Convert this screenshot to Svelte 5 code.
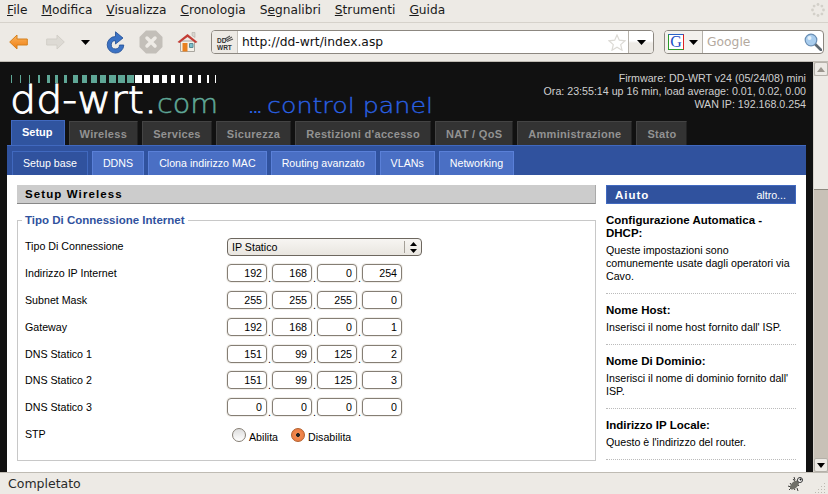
<script lang="ts">
	const menus = [
		['F', 'ile'],
		['M', 'odifica'],
		['V', 'isualizza'],
		['C', 'ronologia'],
		['Se', 'gnalibri', 1],
		['S', 'trumenti'],
		['G', 'uida']
	];
	const tabs = ['Setup', 'Wireless', 'Services', 'Sicurezza', "Restizioni d'accesso", 'NAT / QoS', 'Amministrazione', 'Stato'];
	const subtabs = ['Setup base', 'DDNS', 'Clona indirizzo MAC', 'Routing avanzato', 'VLANs', 'Networking'];
	const rows = [
		['Indirizzo IP Internet', [192, 168, 0, 254]],
		['Subnet Mask', [255, 255, 255, 0]],
		['Gateway', [192, 168, 0, 1]],
		['DNS Statico 1', [151, 99, 125, 2]],
		['DNS Statico 2', [151, 99, 125, 3]],
		['DNS Statico 3', [0, 0, 0, 0]]
	] as [string, number[]][];
	const help = [
		['Configurazione Automatica - DHCP:', 'Queste impostazioni sono comunemente usate dagli operatori via Cavo.'],
		['Nome Host:', 'Inserisci il nome host fornito dall\' ISP.'],
		['Nome Di Dominio:', 'Inserisci il nome di dominio fornito dall\' ISP.'],
		['Indirizzo IP Locale:', 'Questo è l\'indirizzo del router.']
	];
	// widths of the logo's equalizer bars, left to right
	const ticks = [1, 1, 1, 2, 3, 3, 3, 5, 5, 6, 6, 7, 7, 7, 7, 6, 6, 5, 4, 3, 3, 3, 2, 1];
</script>

<div class="window">
	<nav class="menubar">
		{#each menus as m}
			<span class="menu">
				{#if m[2]}S<u>e</u>{:else}<u>{m[0]}</u>{/if}{m[2] ? 'gnalibri' : m[1]}
			</span>
		{/each}
		<svg class="throbber" width="14" height="14" viewBox="0 0 14 14">
			{#each [0, 45, 90, 135, 180, 225, 270, 315] as a}
				<circle cx="7" cy="1.5" r="1.4" fill="#d3d0c9" transform="rotate({a} 7 7)" />
			{/each}
		</svg>
	</nav>

	<div class="toolbar">
		<svg class="tool" width="19" height="16" viewBox="0 0 19 16">
			<defs>
				<linearGradient id="backFill" x1="0" y1="0" x2="0" y2="1">
					<stop offset="0" stop-color="#fbb45c" />
					<stop offset="1" stop-color="#ef7d12" />
				</linearGradient>
			</defs>
			<path d="M.7 8 8 1v4h10.300v6H8v4z" fill="url(#backFill)" stroke="#d5811f" />
		</svg>
		<svg class="tool forward" width="19" height="16" viewBox="0 0 19 16">
			<path d="M18.300 8 11 1v4H.7v6H11v4z" fill="#dddad4" stroke="#d2cfc8" />
		</svg>
		<svg class="tool drop" width="9" height="5" viewBox="0 0 9 5"><path d="M0 0h9L4.500 5z" fill="#000" /></svg>
		<svg class="tool reload" width="20" height="23" viewBox="0 0 20 23">
			<path d="M10.500 5.500A8.300 8.300 0 1 0 18.800 14h-4.300a4.100 4.100 0 1 1-4-4.300V13L18 7 10.500.8z" fill="#3b72c4" stroke="#1f4c94" stroke-width=".8" />
		</svg>
		<svg class="tool stop" width="24" height="24" viewBox="0 0 24 24">
			<path d="M7 .5h10L23.500 7v10L17 23.500H7L.5 17V7z" fill="#c3bfb9" />
			<path d="M8 8l8 8M16 8l-8 8" stroke="#eeebe6" stroke-width="3.500" stroke-linecap="round" />
		</svg>
		<svg class="tool home" width="21" height="20" viewBox="0 0 21 20">
			<path d="M3.500 9h14v10.500h-14z" fill="#f3f0e8" stroke="#a9a69f" />
			<path d="M.5 10 10.500 2l10 8-2 1-8-6-8 6z" fill="#c33d35" />
			<path d="M15 .5h3v5l-3-2z" fill="#d8d5ce" stroke="#aaa69f" stroke-width=".5" />
			<path d="M5.500 11h5v8.500h-5z" fill="#e8801f" />
			<path d="M12.500 11.500h3.500v4h-3.500z" fill="#7cc0cc" stroke="#5b8a94" />
		</svg>
		<div class="urlbar">
			<span class="favicon">
				<svg width="18" height="15" viewBox="0 0 18 15">
					<path d="M9 4 14 1M10 5.500 16 2M11 6.500 17 4" stroke="#555" stroke-width="1.100" />
					<text x="1" y="8" class="fav-text">DD</text>
					<text x="1" y="14.500" class="fav-text">WRT</text>
				</svg>
			</span>
			<span class="url">http://dd-wrt/index.asp</span>
			<svg class="star" width="18" height="17" viewBox="0 0 18 17">
				<path d="M9 1l2.300 5.200 5.700.6-4.300 3.800 1.300 5.600L9 13.300l-5 2.900 1.300-5.600L1 6.800l5.700-.6z" fill="#fff" stroke="#dcdad5" stroke-width="1.200" />
			</svg>
			<span class="url-drop"><svg width="9" height="5" viewBox="0 0 9 5"><path d="M0 0h9L4.500 5z" fill="#000" /></svg></span>
		</div>
		<div class="search">
			<span class="engine">
				<span class="g-box">G</span>
				<svg width="9" height="5" viewBox="0 0 9 5"><path d="M0 0h9L4.500 5z" fill="#000" /></svg>
			</span>
			<span class="search-text">Google</span>
			<svg class="glass" width="18" height="18" viewBox="0 0 18 18">
				<path d="M11 11l6 6" stroke="#5c6770" stroke-width="2.600" stroke-linecap="round" />
				<circle cx="7" cy="7" r="5.800" fill="#a9cdee" stroke="#6a8fb5" stroke-width="1.200" />
				<circle cx="5.500" cy="5" r="2" fill="#e4f1fb" />
			</svg>
		</div>
	</div>

	<div class="viewport">
		<main class="page">
			<header class="banner">
				<div class="brand">
					<div class="ticks">
						{#each ticks as w, i}
							<span><i class:green={i < 14} style="width:{w}px"></i></span>
						{/each}
					</div>
					<svg class="logo" width="430" height="36" viewBox="0 0 430 36">
						<text x="0" y="33" class="logo-main" textLength="147" lengthAdjust="spacingAndGlyphs">dd-wrt.</text>
						<text x="147" y="33" class="logo-com" textLength="61" lengthAdjust="spacingAndGlyphs">com</text>
						<text x="239" y="33" class="logo-dots">...</text>
						<text x="257" y="33" class="logo-panel" textLength="166" lengthAdjust="spacingAndGlyphs">control panel</text>
					</svg>
				</div>
				<div class="info">
					<div>Firmware: DD-WRT v24 (05/24/08) mini</div>
					<div>Ora: 23:55:14 up 16 min, load average: 0.01, 0.02, 0.00</div>
					<div>WAN IP: 192.168.0.254</div>
				</div>
			</header>

			<div class="tabs">
				{#each tabs as t, i}
					<span class="tab" class:active={i === 0}>{t}</span>
				{/each}
			</div>
			<div class="subtabs">
				{#each subtabs as t, i}
					<span class="subtab" class:active={i === 0}>{t}</span>
				{/each}
			</div>

			<div class="content">
				<section class="main-col">
					<h2 class="section-title">Setup Wireless</h2>
					<fieldset>
						<legend>Tipo Di Connessione Internet</legend>
						<div class="row">
							<span class="label">Tipo Di Connessione</span>
							<span class="select">
								<span class="select-value">IP Statico</span>
								<span class="select-btn">
									<svg width="7" height="11" viewBox="0 0 7 11"><path d="M0 4 3.500 0 7 4zM0 7h7l-3.500 4z" fill="#000" /></svg>
								</span>
							</span>
						</div>
						{#each rows as [label, ip]}
							<div class="row">
								<span class="label">{label}</span>
								<span class="ip">
									{#each ip as n, i}
										<span class="octet">{n}</span>{#if i < 3}<span class="dot">.</span>{/if}
									{/each}
								</span>
							</div>
						{/each}
						<div class="row">
							<span class="label">STP</span>
							<span class="radios">
								<span class="radio"></span><span class="radio-label">Abilita</span>
								<span class="radio on"></span><span class="radio-label">Disabilita</span>
							</span>
						</div>
					</fieldset>
				</section>
				<aside class="help">
					<div class="help-title"><b>Aiuto</b><span>altro...</span></div>
					{#each help as h}
						<div class="help-item">
							<h4>{h[0]}</h4>
							<p>{h[1]}</p>
						</div>
					{/each}
				</aside>
			</div>
		</main>

		<div class="scrollbar">
			<span class="sb-btn"><svg width="8" height="5" viewBox="0 0 8 5"><path d="M0 5 4 0l4 5z" fill="#9a958d" /></svg></span>
			<span class="sb-thumb"><i></i></span>
			<span class="sb-track"></span>
			<span class="sb-btn"><svg width="8" height="5" viewBox="0 0 8 5"><path d="M0 0h8L4 5z" fill="#000" /></svg></span>
		</div>
	</div>

	<footer class="status">
		<span>Completato</span>
		<svg class="bug" width="18" height="16" viewBox="0 0 18 16">
			<path d="M2 14 12 4M3 7l5 7M6 3l6 7M1 10l3 1M10 12l1 3M7 1l1 3" stroke="#3c3c3a" stroke-width="1" />
			<ellipse cx="7.500" cy="9" rx="3.200" ry="5.500" transform="rotate(45 7.500 9)" fill="#6f6f68" />
			<circle cx="13" cy="4" r="2.500" fill="#fff" stroke="#333" />
			<circle cx="13.500" cy="3.500" r="1" fill="#111" />
		</svg>
		<svg class="grip" width="11" height="11" viewBox="0 0 11 11">
			{#each [[9, 1], [6, 4], [9, 4], [3, 7], [6, 7], [9, 7], [0, 10], [3, 10], [6, 10], [9, 10]] as d}
				<rect x={d[0]} y={d[1]} width="1" height="1" fill="#bdb9b1" />
			{/each}
		</svg>
	</footer>
</div>

<style>
	:global(body) {
		margin: 0;
		overflow: hidden;
	}

	.window {
		width: 828px;
		height: 494px;
		display: flex;
		flex-direction: column;
		background: #edeae5;
		font-family: 'DejaVu Sans', sans-serif;
		color: #1a1a1a;
		overflow: hidden;
	}

	/* browser chrome */
	.menubar {
		height: 23px;
		box-sizing: border-box;
		padding: 0 3px 2px 7px;
		display: flex;
		align-items: center;
		gap: 14px;
		font-size: 12.2px;
		border-bottom: 1px solid #d6d2cb;
		flex: none;
	}

	.throbber {
		margin-left: auto;
	}

	.toolbar {
		height: 39px;
		flex: none;
		display: flex;
		align-items: center;
		box-sizing: border-box;
		padding-left: 9px;
		border-bottom: 1px solid #bfbbb3;
	}

	.tool {
		flex: none;
	}

	.forward {
		margin-left: 18px;
	}

	.drop {
		margin-left: 16px;
	}

	.reload {
		margin-left: 15px;
	}

	.stop {
		margin-left: 14px;
	}

	.home {
		margin-left: 14px;
		margin-right: 13px;
	}

	.urlbar,
	.search {
		height: 24px;
		background: #fff;
		border: 1px solid #8c8780;
		border-radius: 4px;
		box-sizing: border-box;
		display: flex;
		align-items: center;
		flex: none;
	}

	.urlbar {
		width: 443px;
	}

	.favicon {
		width: 25px;
		height: 22px;
		background: #edeae5;
		border-right: 1px solid #c5c1ba;
		border-radius: 3px 0 0 3px;
		display: flex;
		align-items: center;
		justify-content: center;
		flex: none;
	}

	.fav-text {
		font-family: 'Liberation Sans', sans-serif;
		font-weight: 700;
		font-size: 6.500px;
		fill: #333;
	}

	.url {
		margin-left: 4px;
		font-size: 12.3px;
		color: #111;
		flex: 1;
	}

	.star {
		margin-right: 2px;
	}

	.url-drop {
		width: 24px;
		height: 22px;
		border-left: 1px solid #b5b1aa;
		background: linear-gradient(#fff 45%, #edeae5 55%);
		border-radius: 0 3px 3px 0;
		display: flex;
		align-items: center;
		justify-content: center;
	}

	.search {
		width: 160px;
		margin-left: 10px;
	}

	.engine {
		width: 38px;
		height: 22px;
		box-sizing: border-box;
		padding-left: 3px;
		border-right: 1px solid #b5b1aa;
		border-radius: 3px 0 0 3px;
		background: #f3f1ed;
		display: flex;
		align-items: center;
		gap: 5px;
	}

	.g-box {
		width: 16px;
		height: 16px;
		box-sizing: border-box;
		border: 1px solid;
		border-color: #2a62c8 #d22 #2a9a2a #2a9a2a;
		font-family: 'Liberation Serif', serif;
		font-size: 16px;
		line-height: 14px;
		text-align: center;
		color: #1c4fc4;
		background: #fff;
	}

	.search-text {
		margin-left: 4px;
		font-size: 12.3px;
		color: #b3a99e;
		flex: 1;
	}

	.glass {
		margin-right: 1px;
	}

	.viewport {
		flex: 1;
		display: flex;
		min-height: 0;
		border-bottom: 1px solid #bfbbb3;
	}

	.page {
		flex: 1;
		background: #111;
		font-family: 'Liberation Sans', sans-serif;
		font-size: 10.67px;
		padding: 0 7px;
		overflow: hidden;
	}

	.scrollbar {
		width: 15px;
		flex: none;
		display: flex;
		flex-direction: column;
		background: #c8c1b7;
		border-left: 1px solid #d8d4cd;
		box-sizing: border-box;
	}

	.sb-btn {
		height: 14px;
		background: #edeae5;
		border: 1px solid #b5b1aa;
		border-radius: 2px;
		box-sizing: border-box;
		display: flex;
		align-items: center;
		justify-content: center;
		flex: none;
	}

	.sb-thumb {
		height: 114px;
		box-sizing: border-box;
		background: #edeae5;
		border-bottom: 1px solid #8e897f;
		display: flex;
		align-items: center;
		justify-content: center;
		flex: none;
	}

	.sb-thumb i {
		width: 8px;
		height: 18px;
		background-image: radial-gradient(#c8c1b7 35%, transparent 40%);
		background-size: 2px 2px;
	}

	.sb-track {
		flex: 1;
	}

	.status {
		height: 21px;
		flex: none;
		display: flex;
		align-items: center;
		padding-left: 8px;
		font-size: 12.5px;
		color: #2a2a2a;
	}

	.bug {
		margin-left: auto;
		margin-right: 10px;
	}

	.grip {
		align-self: flex-end;
		margin-right: 2px;
		margin-bottom: 1px;
	}

	/* dd-wrt banner */
	.banner {
		height: 57px;
		display: flex;
		justify-content: space-between;
		color: #cfcfcf;
	}

	.brand {
		padding: 13px 0 0 3px;
	}

	.ticks {
		display: grid;
		grid-template-columns: repeat(24, 8.9px);
		height: 8px;
		margin-left: 1px;
	}

	.ticks span {
		display: block;
	}

	.ticks i {
		display: block;
		height: 8px;
		background: #fff;
	}

	.ticks i.green {
		background: #5fa796;
	}

	.logo {
		display: block;
		overflow: visible;
		margin-top: -3px;
	}

	.logo text {
		font-family: 'DejaVu Sans', sans-serif;
		font-weight: 200;
	}

	.logo .logo-main {
		font-size: 37px;
		fill: #fff;
		stroke: #fff;
		stroke-width: 0.9px;
	}

	.logo .logo-com {
		fill: #5fa796;
		stroke: #5fa796;
		stroke-width: 0.5px;
		font-size: 26px;
	}

	.logo .logo-panel {
		fill: #2a62e6;
		stroke: #2a62e6;
		stroke-width: 0.3px;
		font-size: 22px;
	}

	.logo .logo-dots {
		fill: #2a62e6;
		font-size: 11px;
		font-weight: 700;
	}

	.info {
		text-align: right;
		line-height: 13px;
		padding-top: 10px;
		color: #cfcfcf;
	}

	.tabs {
		display: flex;
		align-items: flex-end;
		gap: 4px;
		height: 26px;
		padding-left: 4px;
	}

	.tab {
		height: 24px;
		box-sizing: border-box;
		padding: 0 10px;
		line-height: 24px;
		background: #333;
		border: 1px solid #444;
		border-bottom: 0;
		border-right-color: #222;
		color: #929292;
		font-weight: 700;
		font-size: 11px;
		letter-spacing: 0.3px;
	}

	.tab.active {
		height: 25px;
		line-height: 23px;
		padding: 0 11px 0 10px;
		background: #30549f;
		border: 1px solid #4169bf;
		border-bottom: 0;
		color: #fff;
		letter-spacing: 0;
	}

	.subtabs {
		height: 30px;
		box-sizing: border-box;
		background: #30529e;
		border-top: 1px solid #4169bf;
		display: flex;
		align-items: flex-end;
		gap: 4px;
		padding-left: 5px;
	}

	.subtab {
		height: 24px;
		box-sizing: border-box;
		padding: 0 10px;
		line-height: 22px;
		background: #4a6fc4;
		border: 1px solid #5a80d8;
		border-bottom: 0;
		color: #fff;
	}

	.subtab.active {
		background: #30529e;
		border-color: #4169bf;
	}

	/* page body */
	.content {
		background: #fff;
		display: flex;
		gap: 10px;
		padding: 10px 10px 0;
		height: 400px;
		color: #000;
	}

	.main-col {
		width: 579px;
		flex: none;
	}

	.section-title {
		margin: 0;
		height: 19px;
		background: #ccc;
		border-bottom: 1px solid #888;
		border-right: 1px solid #aaa;
		box-sizing: border-box;
		padding-left: 8px;
		font-size: 11.500px;
		line-height: 18px;
		letter-spacing: 1.1px;
		font-weight: 700;
	}

	fieldset {
		margin: 10px 0 0;
		padding: 7px 8px 0 7px;
		border: 1px solid #c8c8c8;
		height: 247px;
		box-sizing: border-box;
	}

	legend {
		padding: 0 3px;
		margin-left: -3px;
		color: #30529e;
		font-weight: 700;
		font-size: 11.500px;
	}

	.row {
		display: flex;
		align-items: center;
		height: 26.8px;
	}

	.label {
		width: 202px;
		flex: none;
	}

	.select {
		width: 195px;
		height: 18px;
		margin-top: 2px;
		box-sizing: border-box;
		border: 1px solid #6d675f;
		border-radius: 4px;
		background: linear-gradient(#f7f5f2, #e9e6e0);
		display: flex;
		align-items: center;
		justify-content: space-between;
		padding-left: 4px;
	}

	.select-btn {
		width: 17px;
		height: 12px;
		box-sizing: border-box;
		border-left: 1px solid #a5a098;
		display: flex;
		align-items: center;
		justify-content: center;
	}

	.ip {
		display: flex;
		align-items: center;
		margin-left: -1px;
	}

	.octet {
		width: 40px;
		height: 18px;
		box-sizing: border-box;
		border: 1px solid #857e74;
		border-radius: 4px;
		background: #fff;
		text-align: right;
		padding-right: 4px;
		line-height: 17px;
		margin: 1px;
		box-shadow: 0 0 0 1px #f1efeb;
	}

	.dot {
		width: 3px;
		text-align: center;
		align-self: flex-end;
		line-height: 10px;
	}

	.radios {
		display: flex;
		align-items: center;
		padding-left: 5px;
		margin-top: 2px;
	}

	.radio {
		width: 14px;
		height: 14px;
		box-sizing: border-box;
		border-radius: 50%;
		border: 1px solid #857e74;
		background: linear-gradient(#ddd, #fff);
	}

	.radio.on {
		border-color: #b2602c;
		background: radial-gradient(#222 20%, #f08a50 26%, #e8733a 100%);
		margin-left: 13px;
	}

	.radio-label {
		margin-left: 3px;
		position: relative;
		top: 2px;
	}

	.help {
		width: 190px;
		flex: none;
	}

	.help-title {
		height: 19px;
		box-sizing: border-box;
		background: #30529e;
		border: 1px solid #4169bf;
		color: #fff;
		display: flex;
		justify-content: space-between;
		align-items: center;
		padding: 0 9px 0 8px;
	}

	.help-title b {
		font-size: 11.500px;
		letter-spacing: 1px;
	}

	.help-item {
		padding: 10px 0;
		border-bottom: 1px dotted #bbb;
	}

	.help-item h4 {
		margin: 0 0 4px;
		font-size: 11.500px;
		line-height: 13px;
	}

	.help-item p {
		margin: 0;
		line-height: 13px;
	}
</style>
